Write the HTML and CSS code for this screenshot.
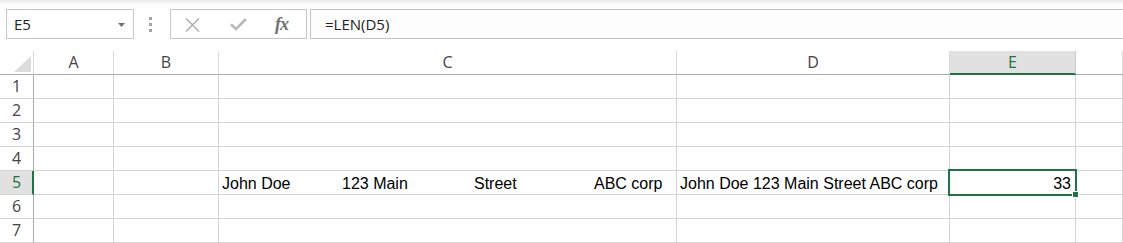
FILE: index.html
```html
<!DOCTYPE html>
<html>
<head>
<meta charset="utf-8">
<title>Excel LEN</title>
<link rel="stylesheet" href="styles.css">
</head>
<body>
<div class="toolbar">
  <div class="namebox">
    <span class="name">E5</span>
    <svg class="dd" width="7" height="4" viewBox="0 0 7 4"><path d="M0 0H7L3.5 4Z" fill="#6e6e6e"/></svg>
  </div>
  <div class="grip"><i></i><i></i><i></i></div>
  <div class="fxbox">
    <svg class="ico-x" width="15" height="14" viewBox="0 0 15 14"><path d="M1 0.5L14 13.5M14 0.5L1 13.5" stroke="#b3b3b3" stroke-width="1.6" fill="none"/></svg>
    <svg class="ico-check" width="17" height="13" viewBox="0 0 17 13"><path d="M1 6.5L6 11L16 1" stroke="#b8b8b8" stroke-width="2.6" fill="none"/></svg>
    <span class="fx">fx</span>
  </div>
  <div class="formula">=LEN(D5)</div>
</div>
<div class="sheet">
  <div class="corner"><svg width="17" height="16" viewBox="0 0 17 16"><path d="M17 0V16H0Z" fill="#dcdcdc"/></svg></div>
  <div class="ch">A</div><div class="ch">B</div><div class="ch">C</div><div class="ch">D</div><div class="ch sel">E</div><div class="ch"></div>

  <div class="rh">1</div><div class="c"></div><div class="c"></div><div class="c"></div><div class="c"></div><div class="c"></div><div class="c"></div>
  <div class="rh">2</div><div class="c"></div><div class="c"></div><div class="c"></div><div class="c"></div><div class="c"></div><div class="c"></div>
  <div class="rh">3</div><div class="c"></div><div class="c"></div><div class="c"></div><div class="c"></div><div class="c"></div><div class="c"></div>
  <div class="rh">4</div><div class="c"></div><div class="c"></div><div class="c"></div><div class="c"></div><div class="c"></div><div class="c"></div>
  <div class="rh sel">5</div><div class="c"></div><div class="c"></div>
  <div class="c txt split"><span class="w1">John Doe</span><span class="w2">123 Main</span><span class="w3">Street</span><span>ABC corp</span></div>
  <div class="c txt">John Doe 123 Main Street ABC corp</div>
  <div class="c txt num active">33<span class="handle"></span></div>
  <div class="c"></div>
  <div class="rh">6</div><div class="c"></div><div class="c"></div><div class="c"></div><div class="c"></div><div class="c"></div><div class="c"></div>
  <div class="rh">7</div><div class="c"></div><div class="c"></div><div class="c"></div><div class="c"></div><div class="c"></div><div class="c"></div>
</div>
</body>
</html>
```

FILE: styles.css
```css
html, body {
  margin: 0;
  padding: 0;
  background: #fff;
  overflow: hidden;
}
body {
  width: 1123px;
  height: 243px;
  font-family: "Open Sans", "Noto Sans", sans-serif;
  color: #222;
}
.toolbar {
  display: flex;
  align-items: flex-start;
  height: 51px;
  box-sizing: border-box;
  padding: 9px 0 0 6px;
  background: linear-gradient(#e9e9e9, #fbfbfb 4px, #fff 8px);
}
.namebox {
  width: 128px;
  height: 30px;
  box-sizing: border-box;
  border: 1px solid #c6c6c6;
  background: #fff;
  display: flex;
  align-items: center;
  justify-content: space-between;
  padding: 0 8px 0 7px;
}
.name {
  font-size: 15px;
  line-height: 28px;
  color: #222;
}
.dd {
  display: block;
  margin-top: 1px;
}
.grip {
  display: flex;
  flex-direction: column;
  gap: 3px;
  margin-left: 15px;
  padding-top: 8px;
}
.grip i {
  display: block;
  width: 3px;
  height: 3px;
  background: #a3a3a3;
}
.fxbox {
  width: 137px;
  height: 30px;
  box-sizing: border-box;
  margin-left: 18px;
  border: 1px solid #c6c6c6;
  background: #fff;
  display: flex;
  align-items: center;
  padding-left: 14px;
}
.ico-x { display: block; margin-top: 1px; }
.ico-check { display: block; margin-left: 30px; margin-top: 1px; }
.fx {
  margin-left: 28px;
  font-family: "Liberation Serif", "DejaVu Serif", serif;
  font-style: italic;
  font-weight: bold;
  font-size: 18px;
  color: #707070;
  letter-spacing: -1px;
  line-height: 28px;
}
.formula {
  flex: 1;
  height: 30px;
  box-sizing: border-box;
  margin-left: 3px;
  margin-right: -2px;
  border: 1px solid #c6c6c6;
  background: #fdfdfd;
  padding-left: 14px;
  font-size: 15px;
  line-height: 28px;
  color: #222;
}
.sheet {
  display: grid;
  grid-template-columns: 34px 80px 105px 458px 273px 126px 1fr;
  grid-auto-rows: 24px;
}
.sheet > div {
  box-sizing: border-box;
}
.corner {
  border-right: 1px solid #dadada;
  border-bottom: 1px solid #ababab;
  display: flex;
  align-items: flex-start;
  padding: 5px 0 0 14px;
}
.corner svg { display: block; }
.ch {
  border-right: 1px solid #dadada;
  border-bottom: 1px solid #ababab;
  text-align: center;
  font-size: 16px;
  line-height: 23px;
  color: #444;
}
.ch.sel {
  background: #e1e1e1;
  color: #217346;
  border-bottom: 2px solid #217346;
  border-right-color: #c6c6c6;
  line-height: 22px;
}
.rh {
  border-right: 1px solid #ababab;
  border-bottom: 1px solid #d4d4d4;
  text-align: center;
  font-size: 16px;
  line-height: 23px;
  color: #444;
}
.rh.sel {
  background: #e1e1e1;
  color: #217346;
  border-right: 2px solid #217346;
  padding-left: 1px;
}
.c {
  border-right: 1px solid #d4d4d4;
  border-bottom: 1px solid #d4d4d4;
}
.txt {
  font-family: "Liberation Sans", Arial, sans-serif;
  font-size: 16px;
  line-height: 21px;
  padding: 2px 3px 0 3px;
  color: #000;
  white-space: nowrap;
}
.split {
  display: flex;
}
.w1 { width: 120px; }
.w2 { width: 132px; }
.w3 { width: 120px; }
.num {
  text-align: right;
  padding-right: 4px;
}
.active {
  position: relative;
}
.active::after {
  content: "";
  position: absolute;
  left: -2px;
  top: -2px;
  right: -2px;
  bottom: -2px;
  border: 2px solid #217346;
}
.handle {
  position: absolute;
  right: -4px;
  bottom: -4px;
  width: 5px;
  height: 5px;
  background: #217346;
  border: 1px solid #fff;
  z-index: 2;
}
```
